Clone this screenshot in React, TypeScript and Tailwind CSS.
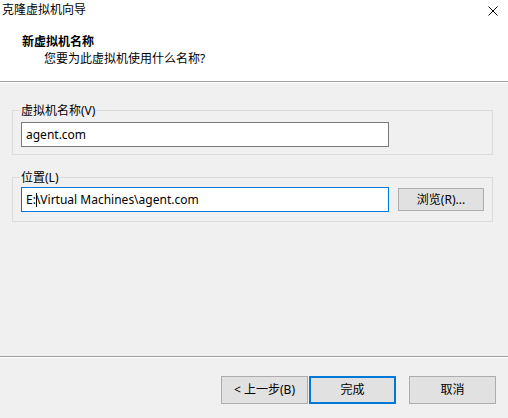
import React from "react";

const font = {
  fontFamily: '"Noto Sans", "Noto Sans CJK SC", sans-serif',
};

function Btn({
  children,
  primary,
}: {
  children: React.ReactNode;
  primary?: boolean;
}) {
  return (
    <div
      className={
        "flex h-[28px] w-[87px] items-center justify-center bg-[#e1e1e1] text-[12px] leading-[16px] text-black " +
        (primary ? "border-2 border-[#0078d7]" : "border border-[#adadad]")
      }
    >
      {children}
    </div>
  );
}

export default function App() {
  return (
    <div
      className="flex h-[418px] w-[508px] flex-col overflow-hidden bg-[#f0f0f0] text-[12px] text-black"
      style={font}
    >
      {/* Header */}
      <div className="h-[82px] border-b border-[#a0a0a0] bg-white">
        <div className="flex h-[22px] items-start justify-between">
          <span className="pl-[2px] pt-[2px] leading-[16px]">克隆虚拟机向导</span>
          <svg
            className="mr-[10px] mt-[6px]"
            width="10"
            height="10"
            viewBox="0 0 10 10"
          >
            <path d="M0.5 0.5 L9.5 9.5 M9.5 0.5 L0.5 9.5" stroke="#000" strokeWidth="1" />
          </svg>
        </div>
        <div className="mt-[12px] pl-[22px] font-bold leading-[16px]">新虚拟机名称</div>
        <div className="mt-[1px] pl-[44px] leading-[16px]">您要为此虚拟机使用什么名称?</div>
      </div>
      <div className="h-[1px] bg-white" />

      {/* Group 1 */}
      <div className="relative ml-[12px] mt-[27px] w-[481px] border border-[#dcdcdc] pb-[7px] pl-[8px] pt-[11px]">
        <span className="absolute left-[7px] top-[-8px] bg-[#f0f0f0] px-[1px] leading-[16px]">
          虚拟机名称(V)
        </span>
        <div className="h-[25px] w-[368px] border border-[#7a7a7a] bg-white pl-[4px] leading-[23px]">
          agent.com
        </div>
      </div>

      {/* Group 2 */}
      <div className="relative ml-[12px] mt-[22px] flex w-[481px] items-center border border-[#dcdcdc] py-[9px] pl-[8px]">
        <span className="absolute left-[7px] top-[-8px] bg-[#f0f0f0] px-[1px] leading-[16px]">
          位置(L)
        </span>
        <div className="flex h-[25px] w-[368px] items-center border border-[#0078d7] bg-white pl-[4px] leading-[23px]">
          <span>E:</span>
          <span className="-mr-[1px] inline-block h-[14px] w-[1px] bg-black" />
          <span>\Virtual Machines\agent.com</span>
        </div>
        <div className="ml-[9px] flex h-[23px] w-[86px] items-center justify-center border border-[#adadad] bg-[#e1e1e1] leading-[16px]">
          浏览(R)...
        </div>
      </div>

      {/* Footer */}
      <div className="mt-auto h-[62px] border-t border-[#a0a0a0]">
        <div className="h-[1px] bg-white" />
        <div className="mt-[18px] flex pl-[221px]">
          <Btn>&lt; 上一步(B)</Btn>
          <div className="ml-[1px]">
            <Btn primary>完成</Btn>
          </div>
          <div className="ml-[13px]">
            <Btn>取消</Btn>
          </div>
        </div>
      </div>
    </div>
  );
}
